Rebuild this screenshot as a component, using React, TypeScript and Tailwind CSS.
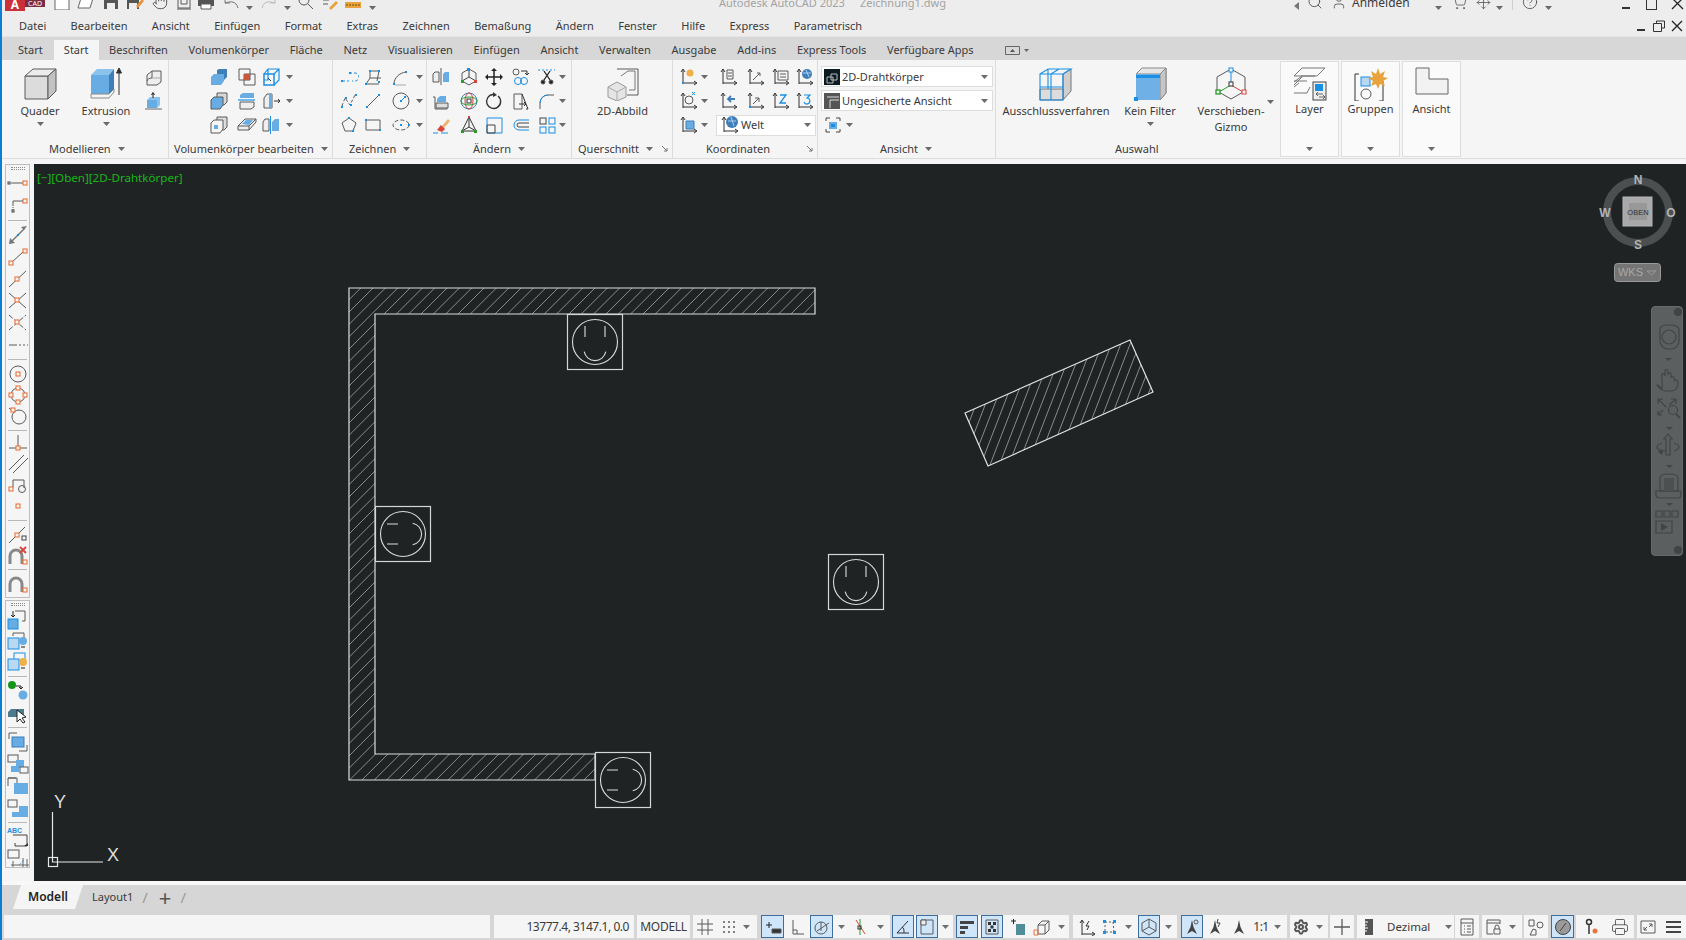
import React from "react";
import { Hand, Search, User, ShoppingCart, CircleHelp, Settings, Printer, Move } from "lucide-react";

const G = "#5a5a5a", B = "#1b8fe3", L = "#67ace3", L2 = "#8cc3ec", D = "#3f7fb8", O = "#e8733c";

const S = ({ w = 20, h = 20, vb, children }: any) => (
  <svg width={w} height={h} viewBox={vb || `0 0 ${w} ${h}`} fill="none" stroke={G} strokeWidth={1} className="block shrink-0">{children}</svg>
);
const Caret = ({ c = "#6a6a6a" }: any) => (
  <svg width="7" height="4" viewBox="0 0 7 4" className="block shrink-0"><path d="M0 0h7L3.5 4z" fill={c} /></svg>
);
const Launch = () => (
  <svg width="6" height="6" viewBox="0 0 6 6" className="block shrink-0"><path d="M0 0l5 5M5 2v3H2" stroke="#777" fill="none" /></svg>
);
const Dot = ({ x, y, c = B, s = 2 }: any) => <rect x={x} y={y} width={s} height={s} fill={c} stroke="none" />;

/* ---------- ribbon icons ---------- */
const Quader = () => (
  <S w={34} h={34}>
    <path d="M2 9h23v23H2z" fill="#dcdcdc" />
    <path d="M2 9l8-7h23l-8 7z" fill="#ececec" />
    <path d="M25 9l8-7v22l-8 8z" fill="#c2c2c2" />
  </S>
);
const Extrusion = () => (
  <S w={32} h={34}>
    <path d="M1 9l6-7h17v22l-5 7H1z" fill="#e2e2e2" stroke="none" />
    <path d="M1 8h18v19H1z" fill={L} stroke="none" />
    <path d="M1 8l6-6h17l-5 6z" fill={L2} stroke="none" />
    <path d="M19 8l5-6v20l-5 5z" fill={D} stroke="none" />
    <path d="M1 27h18l5-5v3l-5 6H1z" fill="#f4f4f4" stroke="#8a8a8a" />
    <path d="M29 28V3M26.5 6L29 1l2.500 5z" stroke="#333" fill="#333" />
  </S>
);
const M1 = () => <S><path d="M3 8l5-4h9v11l-4 3H3z" fill="#eee" /><path d="M8 4v7c-2 0-5 1-5 3" /><path d="M8 11h9" stroke="#aaa" /></S>;
const M2 = () => <S><path d="M3 9h10v8H3z" fill={L} stroke="none" /><path d="M3 9l3-3h10l-3 3zM13 9l3-3v8l-3 3z" fill={L2} stroke="none" /><path d="M9 7V2M7.500 4L9 1.500 10.500 4" stroke="#222" /><path d="M1 18h17" stroke="#666" /></S>;

const V11 = () => <S><path d="M8 3l2-1h8v8l-3 3H8z" fill={D} stroke="none" /><path d="M2 10l3-3h10v7l-3 4H2z" fill={L} stroke="none" /></S>;
const V12 = () => <S><path d="M2 2h11v11H2z" /><path d="M7 7h11v11H7z" /><path d="M7 7h6v6H7z" fill="#c9573a" stroke="none" /></S>;
const V13 = () => <S><path d="M3 7h10v11H3z" fill="#f4f8fc" stroke={B} strokeWidth={1.5} /><path d="M3 7l4-5h11v11l-5 5M13 7l5-5M7 2v11H3" stroke={B} strokeWidth={1.200} /><path d="M7 11l3 3" stroke="#333" /></S>;
const V21 = () => <S><path d="M8 2h10v9l-3 3H8z" fill="#d8d8d8" /><path d="M2 9l3-3h9v8l-3 4H2z" fill={L} /></S>;
const V22 = () => <S><path d="M3 4l3-2h11v5H3z" fill={L} stroke="none" /><path d="M1 9h17" stroke={B} strokeWidth={1.200} /><path d="M3 11h14v5l-3 2H3z" fill="#efefef" /></S>;
const V23 = () => <S><path d="M3 7l3-4h5v14H3z" fill="#eee" /><path d="M8 3h3v14H8z" fill={L} stroke="none" /><path d="M13 10h6M17 8l2 2-2 2" stroke="#333" /></S>;
const V31 = () => <S><path d="M8 2h10v10l-3 3H8z" fill="#ddd" /><path d="M2 8l3-3h9v9l-3 4H2z" fill="#f5f5f5" /><path d="M5 10h4v4H5z" fill={L} stroke="none" /></S>;
const V32 = () => <S><path d="M1 11l7-7h11v3l-7 8H1z" fill="#eee" /><path d="M5 9l4-4h7l-4 5z" fill={L} stroke="none" /><path d="M1 11h11v4M12 11l7-7" /></S>;
const V33 = () => <S><path d="M2 7l2-3h4v12H2z" fill="#eee" /><path d="M11 7l3-3h4v12h-7z" fill={L} stroke="none" /><path d="M9.500 1v18" stroke={B} /></S>;

const Z11 = () => <S><path d="M3 14h7M10 6h6a4 4 0 0 1 0 8h-3" strokeDasharray="3 2" stroke={B} /><Dot x={2} y={13} /><Dot x={10} y={5} /></S>;
const Z12 = () => <S><path d="M7 4v7M7 4h9l-2 10M3 17l4-6h11M3 17h13" /><Dot x={6} y={3} /><Dot x={15} y={3} /><Dot x={2} y={16} /><Dot x={15} y={14} /></S>;
const Z13 = () => <S><path d="M3 17c0-6 5-11 12-12" /><path d="M4 18h11" stroke="#aaa" /><Dot x={2} y={16} /><Dot x={14} y={4} /></S>;
const Z21 = () => <S><path d="M3 15l3-8 5 7 5-10" strokeDasharray="3 2" /><Dot x={2} y={15} /><Dot x={6} y={6} /><Dot x={11} y={13} /><Dot x={16} y={3} /></S>;
const Z22 = () => <S><path d="M4 16L16 4" /><Dot x={3} y={15} /><Dot x={15} y={3} /></S>;
const Z23 = () => <S><circle cx={10} cy={10} r={8} /><path d="M10 10l4-4" stroke={B} /><Dot x={9} y={9} /><Dot x={13} y={5} /></S>;
const Z31 = () => <S><path d="M10 3l7 5-3 8H6L3 8z" /><Dot x={9} y={2} /><Dot x={13} y={15} /></S>;
const Z32 = () => <S><path d="M3 5h14v10H3z" /><Dot x={2} y={4} /><Dot x={16} y={14} /></S>;
const Z33 = () => <S><ellipse cx={10} cy={10} rx={8} ry={5} strokeDasharray="4 2" /><Dot x={9} y={9} /><Dot x={17} y={9} /></S>;

const A11 = () => <S><path d="M2 7l2-2h4v10H2z" fill="#eee" /><path d="M12 7l2-2h4v10h-6z" fill={L} stroke="none" /><path d="M10 1v17" /></S>;
const A12 = () => <S><path d="M10 2l7 4v8l-7 4-7-4V6z" /><path d="M10 10V2M10 10l-7 4M10 10l7 4" stroke="#444" /><Dot x={8} y={1} s={3} /><Dot x={2} y={13} c="#2a9a2a" s={3} /><Dot x={15} y={13} c="#d8433c" s={3} /></S>;
const A13 = () => <S><path d="M10 2v16M2 10h16" stroke="#222" strokeWidth={1.500} /><path d="M10 1l-3 3h6zM10 19l-3-3h6zM1 10l3-3v6zM19 10l-3-3v6z" fill="#222" stroke="none" /></S>;
const A14 = () => <S><rect x={2} y={2} width={6} height={6} rx={3} /><path d="M10 4h6v3M14 6l2 2 2-2" stroke="#333" /><circle cx={7} cy={14} r={3.500} stroke={B} /><circle cx={13} cy={14} r={3.500} stroke={B} /></S>;
const A15 = () => <S><path d="M1 3h17" stroke={B} strokeDasharray="2 2" /><path d="M7 4l6 9M13 4l-6 9" stroke="#222" strokeWidth={1.300} /><circle cx={6} cy={15} r={2} fill="#222" /><circle cx={14} cy={15} r={2} fill="#222" /></S>;
const A21 = () => <S><path d="M2 6h2v12h12v-3" /><path d="M6 8l3-3h6v6H6z" fill={L} stroke="none" /><path d="M5 12h12v5H5z" fill="#ddd" /></S>;
const A22 = () => <S><circle cx={10} cy={10} r={8} stroke={D} /><ellipse cx={10} cy={10} rx={4} ry={8} stroke="#d8433c" /><ellipse cx={10} cy={10} rx={8} ry={4} stroke="#2a9a2a" /><rect x={8} y={8} width={4} height={4} stroke="#333" /></S>;
const A23 = () => <S><path d="M14 5a7 7 0 1 1-5-1.500" stroke="#333" strokeWidth={1.400} /><path d="M9 1l4 3-4 2z" fill="#333" stroke="none" /></S>;
const A24 = () => <S><path d="M3 3h8v15H3z" /><path d="M11 3l6 15h-2M8 13h7M13 11l2 2-2 2" stroke="#333" /></S>;
const A25 = () => <S><path d="M3 18v-6a8 8 0 0 1 8-8h6" /><path d="M3 12a8 8 0 0 1 8-8" stroke={B} /></S>;
const A31 = () => <S><path d="M11 11l6-7 2 2-6 7z" fill="#efb36b" stroke="none" /><path d="M6 15l4-5 4 4-3 3z" fill="#d8433c" stroke="none" /><path d="M2 18h5M10 18h7" stroke={B} /></S>;
const A32 = () => <S><path d="M10 2L3 16h14zM10 2v10M3 16l7-4 7 4" stroke="#333" /><Dot x={9} y={1} c="#d8433c" s={2} /><Dot x={2} y={15} c="#2a9a2a" s={3} /><Dot x={15} y={15} c="#2a9a2a" s={3} /></S>;
const A33 = () => <S><path d="M3 3h15v15H3z" stroke={B} /><path d="M3 10h8v8H3z" stroke="#444" /></S>;
const A34 = () => <S><path d="M18 5H8a5 5 0 0 0 0 10h10" stroke={B} /><path d="M18 8H8a2 2 0 0 0 0 4h10" stroke="#444" /></S>;
const A35 = () => <S><g stroke={B}><rect x={3} y={3} width={6} height={6} stroke="#444" /><rect x={12} y={3} width={6} height={6} /><rect x={3} y={12} width={6} height={6} /><rect x={12} y={12} width={6} height={6} /></g></S>;

const Abbild = () => (
  <S w={34} h={34}>
    <path d="M11 2h21v26H21" /><path d="M15 9l7-5h7v19h-6" stroke="#777" />
    <path d="M2 20l9-5 9 5v10l-9 4-9-4z" fill="#e5e5e5" stroke="#999" />
    <path d="M2 20l9 5 9-5M11 25v9" stroke="#aaa" />
  </S>
);
const Axes = ({ children }: any) => <S><path d="M5 17V3M3 5l2-3 2 3M5 16h13M16 14l3 2-3 2" stroke="#333" />{children}</S>;
const K11 = () => <Axes><circle cx={12} cy={6} r={3.500} fill="#efb04a" stroke="none" /><Dot x={4} y={15} /></Axes>;
const K12 = () => <Axes><path d="M9 3h6v9H9zM10 6h4M10 9h4" /></Axes>;
const K13 = () => <Axes><path d="M8 13l7-7M12 6h3v3" /></Axes>;
const K14 = () => <Axes><path d="M8 4h10v9H8zM10 7h6M10 10h6" /></Axes>;
const K15 = () => <Axes><circle cx={13} cy={7} r={5} fill={D} stroke="none" /><path d="M9 6h8M12 3l3 7" stroke="#a8d0f0" /></Axes>;
const K21 = () => <Axes><circle cx={11} cy={9} r={4} /><path d="M14 4l3-3M14 1l3 3" stroke={B} /></Axes>;
const K22 = () => <Axes><path d="M17 8H11M13 5l-3 3 3 3" stroke={D} strokeWidth={1.800} /></Axes>;
const K23 = () => <Axes><path d="M8 13l6-6M10 7h4v4" /><Dot x={4} y={15} /></Axes>;
const K24 = () => <Axes><path d="M10 4h6l-6 8h6" stroke={B} strokeWidth={1.300} /></Axes>;
const K25 = () => <Axes><path d="M10 4h6l-3 3a3 3 0 1 1-3 4" stroke={B} strokeWidth={1.200} /></Axes>;
const K31 = () => <Axes><path d="M8 6h8v8H8z" fill={L} stroke="#3f7fb8" /></Axes>;
const Welt = () => <Axes><circle cx={13} cy={7} r={6} fill={D} stroke="none" /><path d="M9 6h8M12 2l3 9" stroke="#a8d0f0" /></Axes>;
const Wire = () => (
  <svg width="16" height="16" viewBox="0 0 16 16" className="block shrink-0"><rect width="16" height="16" fill="#0c1a24" /><path d="M7 5h6v6H7zM3 8h6v6H3z" fill="none" stroke="#b8b8b8" /></svg>
);
const UnsavedV = () => (
  <svg width="16" height="16" viewBox="0 0 16 16" className="block shrink-0"><rect width="16" height="16" fill="#555" /><path d="M3 4h12M6 15V7h9" fill="none" stroke="#ddd" /></svg>
);
const AV = () => <S><path d="M3 6V3h4M13 3h4v3M3 14v3h4M17 14v3h-4" stroke="#444" /><path d="M6 7h8v7H6z" fill={L} stroke="none" /><path d="M8 9h4v3H8z" fill={B} stroke="none" /></S>;
const Iso = () => (
  <S w={34} h={34}>
    <g stroke="#777"><path d="M24 7l8-5v22l-8 9z" fill="#cfcfcf" /><path d="M1 22h23v11H1z" fill="#dcdcdc" /></g>
    <g stroke={B} strokeWidth={1.100}><path d="M1 7h23v26H1zM1 7l8-5h23l-8 5M1 20h23M12 7v26M9 2v20M20 2l-8 5" /></g>
  </S>
);
const Filt = () => (
  <S w={34} h={34}>
    <path d="M3 7l6-6h24v25l-6 7V7z" fill="#e6e6e6" stroke="#888" />
    <path d="M27 7l6-6v25l-6 7z" fill="#c6c6c6" stroke="#888" />
    <path d="M3 7h24v26H3z" fill="#6fb1e6" stroke="none" />
    <path d="M3 8h24v3H3z" fill={B} stroke="none" />
    <Dot x={1} y={30} s={4} />
  </S>
);
const Gizmo = () => (
  <S w={34} h={34}>
    <path d="M17 2l14 8v14l-14 8-14-8V10z" />
    <path d="M17 18V5" stroke={B} /><path d="M17 18L5 25" stroke="#2a9a2a" /><path d="M17 18l12 7" stroke="#d8433c" />
    <rect x={15} y={15} width={4} height={4} fill="#f5f5f5" stroke="#333" />
    <rect x={15} y={1} width={4} height={4} fill="#f5f5f5" stroke={B} />
    <rect x={2} y={23} width={4} height={4} fill="#f5f5f5" stroke="#2a9a2a" strokeWidth={1.300} />
    <rect x={28} y={23} width={4} height={4} fill="#f5f5f5" stroke="#d8433c" />
  </S>
);
const LayerI = () => (
  <S w={34} h={34}>
    <path d="M9 1h23l-8 8H1zM1 15l8-6M1 18l8-8" stroke="#777" />
    <path d="M8 9h14M1 14h13M1 26h13l3-6M1 20l5-4" stroke="#777" />
    <rect x={20} y={15} width={13} height={18} fill="#eee" stroke="#444" />
    <path d="M22 17h8v7h-8z" fill={B} stroke="none" />
    <path d="M23 27h7M25 25l-2 2 2 2M26 30h6M30 28l2 2-2 2" stroke="#444" strokeWidth={0.800} />
  </S>
);
const Gruppen = () => (
  <S w={34} h={34}>
    <path d="M5 7H1v27h4M25 34h4V14" stroke="#333" />
    <rect x={7} y={10} width={9} height={9} fill="#b8d8f4" stroke={B} />
    <circle cx={12} cy={27} r={5} />
    <path d="M24 1l2 6 5-3-2 6 5 1-5 3 2 5-5-2-2 5-2-5-5 2 2-5-5-3 5-1-2-6 5 3z" fill="#e8a33c" stroke="none" />
  </S>
);
const AnsichtI = () => (
  <S w={34} h={34}>
    <path d="M1 1h13v11h19v15H1z" fill="#f2f2f2" stroke="#666" />
  </S>
);

/* ---------- ribbon helpers ---------- */
const Ctr = ({ children, className = "" }: any) => <div className={`flex items-center justify-center ${className}`}>{children}</div>;
const PanelLabel = ({ text, caret, launch, className = "" }: any) => (
  <div className={`h-[20px] pt-[2px] flex items-center whitespace-nowrap ${className}`}>
    <span>{text}</span>
    {caret && <span className="ml-[7px]"><Caret /></span>}
    {launch}
  </div>
);
const Big = ({ icon, label, caret, className = "" }: any) => (
  <div className={`flex flex-col items-center pt-[7px] whitespace-nowrap ${className}`}>
    <div className="h-[34px] flex items-end">{icon}</div>
    <div className="mt-[2px] leading-[16px] text-center">{label}</div>
    {caret && <div className="mt-[3px]"><Caret /></div>}
  </div>
);
const Panel = ({ className = "", children }: any) => (
  <div className={`shrink-0 h-[98px] flex flex-col border-r border-[#dcdcdc] ${className}`}>{children}</div>
);
const Cells = ({ items }: any) => <>{items.map((I: any, k: number) => <Ctr key={k}>{I === Caret ? <Caret /> : I ? <I /> : null}</Ctr>)}</>;
const Dropdown = ({ icon, text, className = "" }: any) => (
  <div className={`h-[21px] bg-white border border-[#dddddd] flex items-center pl-[2px] pr-[4px] gap-[2px] ${className}`}>
    {icon}<span className="flex-1 whitespace-nowrap">{text}</span><Caret />
  </div>
);
const SidePanel = ({ icon, label }: any) => (
  <div className="w-[59px] h-[96px] bg-[#fafafa] border border-[#dedede] flex flex-col items-center pt-[5px]">
    <div className="h-[34px]">{icon}</div>
    <div className="leading-[16px]">{label}</div>
    <div className="mt-auto mb-[5px]"><Caret /></div>
  </div>
);

/* ---------- left toolbar icons ---------- */
const Sq = ({ x, y, s = 4, c = O }: any) => <rect x={x} y={y} width={s} height={s} fill="#f5f5f5" stroke={c} strokeWidth={1.100} />;
const T: any = {
  a: <><Sq x={1} y={9} s={2} c="#555" /><path d="M4 10h12" /><Sq x={16} y={8} /></>,
  b: <><Sq x={16} y={4} /><path d="M16 6H6v5" /><path d="M6 12v3" strokeDasharray="1 1" /><Sq x={5} y={15} s={2} c="#555" /></>,
  c: <><path d="M3 19l14-14" stroke="#777" strokeWidth={1.400} /><path d="M20 2l-6 1 3 3zM2 20l1-6 5 5z" fill="#777" stroke="none" /><Dot x={10} y={10} s={2} /></>,
  d: <><path d="M4 17L17 5" /><Sq x={2} y={15} /><Sq x={16} y={3} /></>,
  e: <><path d="M2 19L19 3" /><Sq x={8} y={9} /></>,
  f: <><path d="M2 3l17 15M2 18L19 3" /><Sq x={8} y={8} /></>,
  g: <><path d="M2 3l17 15M2 18L19 3" strokeDasharray="5 2" /><Sq x={8} y={8} /></>,
  h: <path d="M2 11h8M12 11h2M16 11h2M20 11h1" />,
  i: <><circle cx={11} cy={11} r={8} /><Sq x={9} y={9} /></>,
  j: <><circle cx={11} cy={11} r={7} /><Sq x={9} y={2} /><Sq x={9} y={16} /><Sq x={2} y={9} /><Sq x={16} y={9} /></>,
  k: <><circle cx={12} cy={12} r={7} /><path d="M2 3l5 4" /><Sq x={4} y={3} /></>,
  l: <><path d="M2 15h18M11 2v11" /><Sq x={9} y={13} /></>,
  m: <path d="M2 17L17 2M6 20L21 5" />,
  n: <><path d="M6 14V7h11v8" /><circle cx={15} cy={16} r={3.500} /><Sq x={2} y={14} /></>,
  o: <Sq x={9} y={9} />,
  p: <><path d="M2 19L18 3" /><Sq x={8} y={9} /><Sq x={15} y={12} c="#555" /></>,
  q: <><path d="M3 19V11a6 6 0 0 1 12 0v8" stroke="#888" strokeWidth={3} /><path d="M13 2l6 6M19 2l-6 6" stroke="#d8433c" strokeWidth={1.800} /><Sq x={16} y={15} /></>,
  r: <><path d="M3 19V11a6 6 0 0 1 12 0v8" stroke="#888" strokeWidth={3} /><Sq x={16} y={15} /></>,
  s: <><path d="M8 2h10v10h-3" /><path d="M6 2v6M4 6l2 2 2-2" stroke="#222" /><rect x={1} y={10} width={10} height={10} fill={L} stroke={B} /></>,
  t: <><path d="M6 5V2h11v6" /><rect x={1} y={7} width={11} height={11} fill="#b8d8f4" stroke={B} /><circle cx={16} cy={10} r={4} fill={L} stroke="none" /><path d="M14 15h4v2h-4z" fill="#888" stroke="none" /></>,
  u: <><rect x={7} y={1} width={11} height={8} stroke={B} /><rect x={1} y={7} width={11} height={11} fill="#b8d8f4" stroke={B} /><circle cx={16} cy={10} r={4} fill="#efb04a" stroke="none" /><path d="M14 15h4v2h-4z" fill="#888" stroke="none" /></>,
  v: <><circle cx={5} cy={5} r={4} fill="#12961a" stroke="none" /><circle cx={16} cy={15} r={4.500} fill={L} stroke="none" /><path d="M9 6h5v3M12 7l2 2 2-2" stroke="#222" /></>,
  w: <><path d="M1 10l3-3h13v8H1z" fill="#4d7b8c" stroke="none" /><path d="M10 8l0 12 3-3 3 4 2-1-3-4 4-1z" fill="#fff" stroke="#222" /></>,
  x: <><path d="M2 8V2h8M20 14v6h-8" /><rect x={5} y={6} width={12} height={10} fill={L} stroke="#3f7fb8" /></>,
  y: <><rect x={1} y={2} width={10} height={7} /><path d="M4 13h5V7h8v8h-5v4H4z" fill={L} stroke="none" /><rect x={13} y={14} width={8} height={6} fill="#f5f5f5" /></>,
  z: <><path d="M1 3h8M1 3v8" /><path d="M1 3h9v5" /><rect x={7} y={8} width={14} height={11} fill={L} stroke="none" /></>,
  A: <><rect x={1} y={3} width={9} height={7} /><path d="M5 15h7v-6h9v11H5z" fill={L} stroke="none" /></>,
  B: <><text x={0} y={7} fontSize={7} fontWeight={700} fill={B} stroke="none" fontFamily="'Liberation Sans',sans-serif">ABC</text><path d="M6 9h14v11H8v-3" stroke="#444" /><path d="M17 20l4-3v3z" fill="#333" stroke="none" /></>,
  C: <><rect x={1} y={2} width={11} height={8} /><path d="M6 13v7h14v-9M4 17h18M16 10v12" stroke="#666" /><path d="M12 17l5-5" stroke={B} strokeDasharray="1 1" /></>,
};
const ToolItem = ({ k, h = "h-[22px]" }: any) => (
  <div className={`w-full flex items-center justify-center ${h}`}>
    <S w={22} h={22}>{T[k]}</S>
  </div>
);
const Sep = () => <div className="w-[19px] h-px bg-[#b8b8b8] my-[3px] shrink-0" />;
const Grip = () => <div className="w-[14px] h-[3px] mt-[2px] mb-[3px] shrink-0 border-t border-b border-dotted border-[#888]" />;

/* ---------- canvas ---------- */
const wall = "349,288 815,288 815,314 375,314 375,754 595,754 595,780 349,780";
const rect = "965,413 1130,340 1153,392 988,466";
const wallHatch: number[] = [];
for (let c = 636.4; c < 1600; c += 12.33) wallHatch.push(c);
const rectHatch: number[] = [];
for (let k = -14; k < 10; k++) rectHatch.push(36.4 + 8.72 * k);

const Socket = ({ x, y, r }: any) => (
  <g>
    <rect x={x - 27.5} y={y - 27.5} width={55} height={55} stroke="#d6d6d6" strokeWidth={1.200} />
    <g transform={`translate(${x} ${y}) rotate(${r})`} stroke="#dcdcdc" strokeWidth={1.100}>
      <circle r={22.500} />
      <path d="M-10 -16V-5M10 -16V-5" />
      <path d="M-10.800 9.700A11 11 0 0 0 10.800 9.700" />
    </g>
  </g>
);

const Drawing = () => (
  <svg width="1652" height="717" viewBox="34 164 1652 717" fill="none" className="block">
    <defs>
      <clipPath id="w"><polygon points={wall} /></clipPath>
      <clipPath id="r"><polygon points={rect} /></clipPath>
    </defs>
    <g clipPath="url(#w)" stroke="#8a8c8c" strokeWidth={1}>
      {wallHatch.map((c) => <line key={c} x1={c - 250} y1={250} x2={c - 800} y2={800} />)}
    </g>
    <polygon points={wall} stroke="#dcdcdc" strokeWidth={1.200} />
    <g clipPath="url(#r)" stroke="#8a8c8c" strokeWidth={1}>
      {rectHatch.map((o) => {
        const cx = 1059 + 0.933 * o, cy = 403 + 0.36 * o;
        return <line key={o} x1={cx - 0.36 * 90} y1={cy + 0.933 * 90} x2={cx + 0.36 * 90} y2={cy - 0.933 * 90} />;
      })}
    </g>
    <polygon points={rect} stroke="#e4e4e4" strokeWidth={1.200} />
    <Socket x={595} y={342} r={0} />
    <Socket x={403} y={534} r={-90} />
    <Socket x={623} y={780} r={-90} />
    <Socket x={856} y={582} r={0} />
    {/* UCS */}
    <g stroke="#e6e6e6" strokeWidth={1.200}>
      <rect x={48.500} y={857.500} width={9} height={9} />
      <path d="M52.500 812V862H103" />
    </g>
    <text x={54} y={808} fontSize={18} fontFamily="'Liberation Sans',sans-serif" fill="#dedede">Y</text>
    <text x={107} y={861} fontSize={18} fontFamily="'Liberation Sans',sans-serif" fill="#dedede">X</text>
    {/* View cube */}
    <circle cx={1638} cy={212} r={31} stroke="#4b4f50" strokeWidth={8} />
    <rect x={1623} y={197} width={29} height={29} fill="#a9a9a9" stroke="#b5b5b5" />
    <rect x={1629} y={203} width={18} height={17} fill="#989898" />
    <text x={1638} y={215} textAnchor="middle" fontSize={7.500} fontFamily="'Liberation Sans',sans-serif" fill="#303030">OBEN</text>
    <g fontFamily="'Liberation Sans',sans-serif" fontWeight={700} fontSize={12} fill="#b4b4b4" textAnchor="middle">
      <text x={1638} y={184}>N</text><text x={1638} y={249}>S</text><text x={1605} y={217}>W</text><text x={1671} y={217}>O</text>
    </g>
    <rect x={1614.500} y={263.500} width={46} height={18} rx={3} fill="#757575" stroke="#9a9a9a" />
    <text x={1618} y={276} fontSize={11} fontFamily="'Liberation Sans',sans-serif" fill="#a8a8a8" textLength={25}>WKS</text>
    <path d="M1647 271h9l-4.500 4z" stroke="#999" />
  </svg>
);

const NavBar = () => (
  <div className="absolute right-[3px] top-[142px] w-[32px] h-[250px] rounded-[4px] bg-[#5b5f5f] border border-[#666a6a]">
    <svg width="32" height="250" viewBox="0 0 32 250" fill="none" stroke="#414545" strokeWidth={1.200} className="block">
      <circle cx={26} cy={5} r={3.500} fill="#444" />
      <path d="M8 22c0-3 3-4 9-4s10 1 10 5v11a8 8 0 0 1-8 8h-3c-5 0-8-4-8-9z" />
      <circle cx={17} cy={30} r={7} />
      <path d="M13 51h7l-3.500 3z" fill="#414545" stroke="none" />
      <path d="M14 120h7l-3.500 3zM14 158h7l-3.500 3zM14 196h7l-3.500 3z" fill="#414545" stroke="none" />
      <path d="M6 78l4 4c1-5-1-12 0-15 1-1 3 0 3 2v-5c0-2 3-2 3 0v4c0-3 3-3 3 0v3c0-2 3-2 3 0l1 3c0-2 3-1 3 1 0 6-3 9-6 9h-6c-4 0-7-3-9-6z" />
      <path d="M6 92l8 8M6 92v5M6 92h5M6 108l5-5M6 108v-4M6 108h4M24 92l-7 6M24 92v5M24 92h-5" />
      <circle cx={21} cy={103} r={4.500} /><path d="M24 107l4 4" strokeWidth={2} />
      <path d="M16 127l4 5h-2v16h-4v-16h-2z" />
      <path d="M10 136c-3 1-5 2-5 4 0 3 5 4 9 4M22 136c3 1 5 2 5 4s-2 3-5 4" /><path d="M10 143l-3 2 3 2z" fill="#414545" />
      <path d="M8 171c0-3 3-4 9-4s9 1 9 4v13H8z" /><path d="M4 184h25v4c0 2-2 3-4 3H8c-2 0-4-1-4-3z" /><path d="M12 171h10v13H12z" fill="#4c5050" stroke="none" />
      <path d="M4 204h6v6H4zM12 204h6v6h-6zM20 204h6v6h-6zM4 214h16v12H4z" />
      <path d="M9 216v8l7-4z" fill="#414545" stroke="none" />
      <circle cx={26} cy={243} r={3.500} fill="#444" />
    </svg>
  </div>
);

/* ---------- status bar ---------- */
const Seg = ({ className = "", children }: any) => <div className={`h-[23px] bg-[#f5f5f5] flex items-center shrink-0 ${className}`}>{children}</div>;
const C = ({ w, active, children }: any) => (
  <div className={`flex items-center justify-center h-[23px] shrink-0 ${w} ${active ? "bg-[#cfe5fa] border border-[#3d6e9e]" : ""}`}>{children}</div>
);
const SC = () => <Caret c="#6e6e6e" />;
const Sb = ({ children }: any) => <S w={18} h={18} >{children}</S>;
const Annot = ({ c = "#444", children }: any) => <Sb><path d="M9 2l1.500 7L14 16l-5-3-5 3 3.500-7z" fill={c} stroke="none" />{children}</Sb>;

const Status = () => (
  <div className="h-[25px] bg-[#d6d6d6] flex pl-[2px] text-[12px]">
    <Seg className="w-[486px]" />
    <Seg className="w-[140px] ml-[4px] justify-end pr-[5px] tracking-[-0.45px]">13777.4, 3147.1, 0.0</Seg>
    <Seg className="w-[53px] ml-[3px] justify-center tracking-[-0.3px]">MODELL</Seg>
    <Seg className="w-[64px] ml-[3px] pl-[3px]">
      <C w="w-[18px]"><Sb><path d="M1 6h16M1 12h16M6 1v16M12 1v16" /></Sb></C>
      <C w="w-[6px]" />
      <C w="w-[18px]"><Sb><path d="M3 4h2M8 4h2M13 4h2M3 9h2M8 9h2M13 9h2M3 14h2M8 14h2M13 14h2" strokeWidth={1.500} /></Sb></C>
      <C w="w-[16px]"><SC /></C>
    </Seg>
    <Seg className="w-[129px] ml-[4px]">
      <C w="w-[23px]" active><Sb><path d="M2 7h6M5 4v6" stroke="#222" /><path d="M8 11h9v4H8z" fill="#333" /></Sb></C>
      <C w="w-[26px]"><Sb><path d="M5 2v14h11M5 12h4v4" /></Sb></C>
      <C w="w-[23px]" active><Sb><circle cx={8} cy={10} r={6} /><path d="M4 13L16 5M8 13V4" /></Sb></C>
      <C w="w-[16px]"><SC /></C>
      <C w="w-[22px]"><Sb><path d="M5 2l9 14" stroke="#d8433c" /><path d="M9 1v16" stroke="#2a9a2a" /><rect x={7} y={8} width={3} height={3} stroke="#333" /></Sb></C>
      <C w="w-[19px]"><SC /></C>
    </Seg>
    <Seg className="w-[61px] ml-[2px]">
      <C w="w-[22px]" active><Sb><path d="M3 15L14 3M3 15h12M8 9c2 1 2 3 2 6" stroke="#333" /></Sb></C>
      <C w="w-[2px]" />
      <C w="w-[22px]" active><Sb><path d="M3 2h12v14H3z" /><path d="M3 2h5v5H3z" fill="#eee" /></Sb></C>
      <C w="w-[15px]"><SC /></C>
    </Seg>
    <Seg className="w-[113px] ml-[3px]">
      <C w="w-[22px]" active><Sb><path d="M2 3h14v3H2zM2 8h8v3H2zM2 13h5v3H2z" fill="#444" stroke="none" /></Sb></C>
      <C w="w-[3px]" />
      <C w="w-[22px]" active><Sb><path d="M3 2h12v14H3z" /><path d="M5 4h3v3H5zM10 4h3v3h-3zM5 11h3v3H5zM10 11h3v3h-3zM7.500 7.500h3v3h-3z" fill="#333" stroke="none" /></Sb></C>
      <C w="w-[4px]" />
      <C w="w-[22px]"><Sb><path d="M2 3h5M4.500 1v5" stroke="#222" /><path d="M7 6h9v11H7z" fill="#4f8d99" stroke="none" /></Sb></C>
      <C w="w-[25px]"><Sb><path d="M5 7l4-4h7v9l-4 4H5zM5 7h7v9M12 7l4-4" /><path d="M1 12h4v5H1z" stroke={O} /></Sb></C>
      <C w="w-[15px]"><SC /></C>
    </Seg>
    <Seg className="w-[104px] ml-[4px]">
      <C w="w-[25px]"><Sb><path d="M5 17V3M3 5l2-3 2 3M5 16h12M15 14l3 2-3 2" stroke="#333" /><path d="M12 3l-3 5h3l-2 4" stroke="#333" /></Sb></C>
      <C w="w-[21px]"><Sb><path d="M5 4h8l1 10H5z" strokeDasharray="2 2" /><Dot x={3} y={2} s={3} /><Dot x={13} y={2} s={3} /><Dot x={3} y={13} s={3} /><Dot x={13} y={13} s={3} /></Sb></C>
      <C w="w-[19px]"><SC /></C>
      <C w="w-[22px]" active><Sb><path d="M9 1l7 4v8l-7 4-7-4V5zM9 9V1M9 9l-7 4M9 9l7 4" /></Sb></C>
      <C w="w-[17px]"><SC /></C>
    </Seg>
    <Seg className="w-[106px] ml-[4px]">
      <C w="w-[22px]" active><Annot><circle cx={13} cy={4} r={2} /></Annot></C>
      <C w="w-[24px]"><Annot><path d="M12 1l-1 4h3l-2 4" stroke="#444" /></Annot></C>
      <C w="w-[24px]"><Annot /></C>
      <C w="w-[20px]"><span className="tracking-[-0.5px]">1:1</span></C>
      <C w="w-[12px]"><SC /></C>
    </Seg>
    <Seg className="w-[38px] ml-[3px] pl-[1px]">
      <C w="w-[20px]"><Settings size={16} strokeWidth={3} color="#555" /></C>
      <C w="w-[17px]"><SC /></C>
    </Seg>
    <Seg className="w-[24px] ml-[2px] justify-center"><Sb><path d="M9 1v16M1 9h16" strokeWidth={1.300} /></Sb></Seg>
    <Seg className="w-[97px] ml-[3px] pl-[3px]">
      <C w="w-[18px]"><Sb><path d="M5 1h8v16H5z" fill="#555" stroke="none" /><path d="M5 4h3M5 7h2M5 10h3M5 13h2" stroke="#fff" /></Sb></C>
      <C w="w-[9px]" />
      <span className="w-[55px] text-[11.5px]">Dezimal</span>
      <C w="w-[12px]"><SC /></C>
    </Seg>
    <Seg className="w-[24px] ml-px justify-center"><Sb><path d="M3 1h12v16H3zM3 5h12M6 8h1M9 8h4M6 11h1M9 11h4M6 14h1M9 14h4" /></Sb></Seg>
    <Seg className="w-[40px] ml-[3px] pl-[2px]">
      <C w="w-[20px]"><Sb><path d="M2 2h13v4M2 2v14h6M2 5h13" /><path d="M9 11h6v5H9zM10 11V9a2 2 0 0 1 4 0v2" /></Sb></C>
      <C w="w-[16px]"><SC /></C>
    </Seg>
    <Seg className="w-[24px] ml-[2px] justify-center"><Sb><path d="M2 2h5v6H2zM9 12l-3-1-3 6h6z" /><circle cx={13} cy={7} r={3} /></Sb></Seg>
    <Seg className="w-[23px] ml-[3px]">
      <C w="w-[23px]" active><Sb><circle cx={9} cy={9} r={7.500} fill="#9a9a9a" stroke="#444" /><path d="M6 13l6-8" stroke="#444" /></Sb></C>
    </Seg>
    <Seg className="w-[58px] ml-[2px]">
      <C w="w-[30px]"><Sb><circle cx={7} cy={4} r={2.500} stroke="#333" strokeWidth={1.500} /><path d="M7 7v9" stroke="#333" strokeWidth={1.500} /><circle cx={13} cy={13} r={2.500} fill={O} stroke="none" /></Sb></C>
      <C w="w-[28px]"><Printer size={18} strokeWidth={1.200} color="#555" /></C>
    </Seg>
    <Seg className="w-[50px] ml-[3px]">
      <C w="w-[22px]"><Sb><path d="M2 3h14v12H2zM5 12l3-3M5 9v3h3M13 6l-3 3M13 9V6h-3" /></Sb></C>
      <C w="w-[28px]"><Sb><path d="M2 4h15M2 9h15M2 14h15" strokeWidth={1.800} stroke="#444" /></Sb></C>
    </Seg>
  </div>
);

const menu = ["Datei", "Bearbeiten", "Ansicht", "Einfügen", "Format", "Extras", "Zeichnen", "Bemaßung", "Ändern", "Fenster", "Hilfe", "Express", "Parametrisch"];
const tabsLeft = ["Beschriften", "Volumenkörper", "Fläche", "Netz", "Visualisieren", "Einfügen", "Ansicht", "Verwalten", "Ausgabe", "Add-ins", "Express Tools", "Verfügbare Apps"];

const qat = [
  ["w-[24px]", <S w={16} h={16}><path d="M1 0h10l4 4v12H1z" fill="#fff" stroke="#666" /></S>],
  ["w-[24px]", <S w={18} h={16}><path d="M1 14l4-13h12l-4 13z" fill="#fff" stroke="#666" /></S>],
  ["w-[25px]", <S w={16} h={16}><path d="M1 0h14v15H1z" fill="#555" stroke="none" /><path d="M4 9h8v6H4z" fill="#eee" stroke="none" /></S>],
  ["w-[24px]", <S w={18} h={16}><path d="M1 0h12v15H1z" fill="#555" stroke="none" /><path d="M3 9h8v6H3z" fill="#eee" stroke="none" /><path d="M10 12l6-7 2 2-6 7z" fill="#e8933c" stroke="none" /></S>],
  ["w-[26px]", <Hand size={16} strokeWidth={1.300} color="#444" />],
  ["w-[22px]", <S w={16} h={16}><path d="M2 0h12v14H2zM5 4h6v6H5z" /><path d="M1 15h14" /></S>],
  ["w-[22px]", <S w={18} h={16}><path d="M1 5h16v7H1z" fill="#555" stroke="none" /><path d="M4 10h10v5H4z" fill="#fff" /></S>],
];

export default function App() {
  return (
    <div className="w-[1686px] h-[940px] overflow-hidden flex bg-[#f5f5f5] text-[#3a3a3a] text-[11px] leading-[16px] [font-family:'Noto_Sans',sans-serif]">
      <div className="w-[2px] h-full bg-[#0a7dd4] shrink-0" />
      <div className="w-[1684px] flex flex-col">
        {/* title */}
        <div className="h-[16px] bg-[#ededed] flex items-start shrink-0">
          <div className="h-[10px] flex items-end w-full">
            <div className="ml-[3px] w-[45px] self-start flex items-start">
              <div className="w-[20px] h-[11px] bg-[#cb2f3a] flex items-end justify-center text-white font-bold text-[12px] leading-[12px]">A</div>
              <div className="w-[20px] h-[7px] bg-[#7d2b42] flex items-end justify-center text-white text-[7px] leading-[7px]">CAD</div>
            </div>
            {qat.map(([w, ic]: any, k) => <Ctr key={k} className={w}>{ic}</Ctr>)}
            <Ctr className="w-[24px] ml-[2px]"><S w={18} h={14}><path d="M16 12C14 5 9 5 3 7M3 2v5h5" stroke="#777" /></S></Ctr>
            <Ctr className="w-[12px]"><Caret /></Ctr>
            <Ctr className="w-[24px] ml-[2px]"><S w={18} h={14}><path d="M2 12C4 5 9 5 15 7M15 2v5h-5" stroke="#bbb" /></S></Ctr>
            <Ctr className="w-[12px]"><Caret /></Ctr>
            <Ctr className="w-[24px] ml-[1px]"><S w={16} h={16}><circle cx={6} cy={6} r={5} /><path d="M10 10l5 5" /></S></Ctr>
            <Ctr className="w-[24px]"><S w={18} h={16}><path d="M2 2h9M2 6h6M2 10h5" /><path d="M8 14l7-7 2 2-7 7z" fill="#e8a33c" stroke="none" /></S></Ctr>
            <Ctr className="w-[22px]"><S w={16} h={10}><path d="M0 2h16v6H0z" fill="#e8a33c" stroke="none" /><path d="M2 4v2M5 4v2M8 4v2M11 4v2M14 4v2" stroke="#6b4a12" /></S></Ctr>
            <Ctr className="w-[16px]"><Caret /></Ctr>
            <div className="ml-[339px] text-[#a3a3a3] whitespace-nowrap h-[14px] leading-[14px]">Autodesk AutoCAD 2023</div>
            <div className="ml-[15px] text-[#a3a3a3] whitespace-nowrap h-[14px] leading-[14px]">Zeichnung1.dwg</div>
            <div className="ml-auto flex items-end h-[10px]">
              <Ctr className="w-[12px]"><svg width="5" height="8" viewBox="0 0 5 8"><path d="M5 0v8L0 4z" fill="#777" /></svg></Ctr>
              <Ctr className="w-[26px]"><Search size={16} strokeWidth={1.400} color="#555" /></Ctr>
              <Ctr className="w-[22px]"><User size={16} strokeWidth={1.300} color="#555" /></Ctr>
              <div className="w-[55px] ml-[2px] h-[14px] leading-[14px] whitespace-nowrap text-[12px]">Anmelden</div>
              <Ctr className="w-[14px] ml-[24px]"><Caret /></Ctr>
              <Ctr className="w-[28px]"><ShoppingCart size={15} strokeWidth={1.300} color="#555" /></Ctr>
              <Ctr className="w-[20px]"><Move size={15} strokeWidth={1.300} color="#555" /></Ctr>
              <Ctr className="w-[12px]"><Caret /></Ctr>
              <div className="w-px h-[12px] bg-[#cfcfcf] ml-[7px]" />
              <Ctr className="w-[28px] ml-[3px]"><CircleHelp size={16} strokeWidth={1.300} color="#555" /></Ctr>
              <Ctr className="w-[8px]"><Caret /></Ctr>
              <Ctr className="w-[18px] ml-[65px]"><div className="w-[8px] h-[2px] bg-[#333] mb-[1px]" /></Ctr>
              <Ctr className="w-[18px] ml-[7px]"><div className="w-[11px] h-[11px] border border-[#333]" /></Ctr>
              <Ctr className="w-[18px] ml-[8px]"><S w={13} h={13}><path d="M1 1l11 11M12 1L1 12" stroke="#222" strokeWidth={1.300} /></S></Ctr>
            </div>
          </div>
        </div>
        {/* menu */}
        <div className="h-[20px] bg-[#ededed] flex items-center shrink-0 pl-[17px] gap-[24.4px] relative">
          {menu.map((m) => <span key={m}>{m}</span>)}
          <div className="ml-auto flex items-center">
            <Ctr className="w-[12px]"><div className="w-[8px] h-[2px] bg-[#333] mt-[7px]" /></Ctr>
            <Ctr className="w-[18px] ml-[3px]"><S w={12} h={12}><path d="M3.500 3V1h8v7H9M.500 3.500h8v8h-8z" stroke="#333" /></S></Ctr>
            <Ctr className="w-[18px]"><S w={12} h={12}><path d="M1 1l10 10M11 1L1 11" stroke="#222" strokeWidth={1.300} /></S></Ctr>
          </div>
        </div>
        {/* tabs */}
        <div className="h-[24px] bg-[#d7d7d7] border-t border-[#e4e4e4] flex items-end shrink-0 pl-[6px]">
          <div className="px-[10px] h-[20px] flex items-center">Start</div>
          <div className="w-[45px] ml-[1px] h-[20px] bg-[#f5f5f5] flex items-center justify-center">Start</div>
          {tabsLeft.map((t, k) => <div key={k} className="px-[10.35px] h-[20px] flex items-center whitespace-nowrap">{t}</div>)}
          <div className="ml-[21px] h-[20px] flex items-center gap-[4px]">
            <S w={15} h={9}><path d="M.500.500h14v8H.500z" stroke="#666" /><path d="M5 6l2.500-3L10 6z" fill="#555" stroke="none" /></S>
            <svg width="5" height="3" viewBox="0 0 5 3"><path d="M0 0h5L2.500 3z" fill="#666" /></svg>
          </div>
        </div>
        {/* ribbon */}
        <div className="h-[104px] bg-[#f5f5f5] shrink-0">
          <div className="h-[99px] flex pl-[4px] border-b border-[#dcdcdc]">
            <Panel className="w-[163px]">
              <div className="h-[78px] flex">
                <Big className="w-[66px] ml-[1px]" icon={<Quader />} label="Quader" caret />
                <Big className="w-[66px]" icon={<Extrusion />} label="Extrusion" caret />
                <div className="ml-[5px] pt-[5px] flex flex-col">
                  <Ctr className="h-[24px] w-[20px]"><M1 /></Ctr>
                  <Ctr className="h-[24px] w-[20px]"><M2 /></Ctr>
                </div>
              </div>
              <PanelLabel text="Modellieren" caret className="pl-[43px]" />
            </Panel>
            <Panel className="w-[164px]">
              <div className="h-[78px] pt-[5px] pl-[36px] grid grid-cols-[28px_28px_20px_16px] auto-rows-[24px]">
                <Cells items={[V11, V12, V13, Caret, V21, V22, V23, Caret, V31, V32, V33, Caret]} />
              </div>
              <PanelLabel text="Volumenkörper bearbeiten" caret className="pl-[5px]" />
            </Panel>
            <Panel className="w-[94px]">
              <div className="h-[78px] pt-[5px] pl-[5px] grid grid-cols-[22px_26px_30px_6px] auto-rows-[24px]">
                <Cells items={[Z11, Z12, Z13, Caret, Z21, Z22, Z23, Caret, Z31, Z32, Z33, Caret]} />
              </div>
              <PanelLabel text="Zeichnen" caret className="pl-[16px]" />
            </Panel>
            <Panel className="w-[145px]">
              <div className="h-[78px] pt-[5px] pl-[3px] grid grid-cols-[22px_34px_16px_38px_14px_16px] auto-rows-[24px]">
                <Cells items={[A11, A12, A13, A14, A15, Caret, A21, A22, A23, A24, A25, Caret, A31, A32, A33, A34, A35, Caret]} />
              </div>
              <PanelLabel text="Ändern" caret className="pl-[46px]" />
            </Panel>
            <Panel className="w-[101px]">
              <div className="h-[78px] flex justify-center"><Big className="pl-[1px]" icon={<Abbild />} label="2D-Abbild" /></div>
              <PanelLabel text="Querschnitt" caret launch={<span className="ml-[9px]"><Launch /></span>} className="pl-[6px]" />
            </Panel>
            <Panel className="w-[145px]">
              <div className="h-[78px] pt-[5px] pl-[4px] grid grid-cols-[22px_10px_38px_16px_34px_14px] auto-rows-[24px]">
                <Cells items={[K11, Caret, K12, K13, K14, K15, K21, Caret, K22, K23, K24, K25]} />
                <Ctr><K31 /></Ctr><Ctr><Caret /></Ctr>
                <div className="col-span-4 flex items-center ml-[7px]">
                  <Dropdown className="w-[100px] shrink-0" icon={<Welt />} text="Welt" />
                </div>
              </div>
              <PanelLabel text="Koordinaten" launch={<span className="ml-[37px]"><Launch /></span>} className="pl-[33px]" />
            </Panel>
            <Panel className="w-[178px]">
              <div className="h-[78px] pt-[6px] pl-[3px] flex flex-col gap-[3px]">
                <Dropdown className="w-[172px]" icon={<Wire />} text="2D-Drahtkörper" />
                <Dropdown className="w-[172px]" icon={<UnsavedV />} text="Ungesicherte Ansicht" />
                <div className="flex items-center h-[21px] pl-[2px] gap-[3px]"><AV /><Caret /></div>
              </div>
              <PanelLabel text="Ansicht" caret className="pl-[62px]" />
            </Panel>
            <Panel className="w-[283px] border-r-0">
              <div className="h-[78px] flex">
                <Big className="w-[118px] pl-[2px]" icon={<Iso />} label="Ausschlussverfahren" />
                <Big className="w-[70px] pl-[2px]" icon={<Filt />} label="Kein Filter" caret />
                <Big className="w-[66px] pl-[2px] ml-[13px]" icon={<Gizmo />} label={<>Verschieben-<br />Gizmo</>} />
                <div className="pt-[40px] pl-[4px]"><Caret /></div>
              </div>
              <PanelLabel text="Auswahl" className="pl-[119px]" />
            </Panel>
            <div className="flex gap-[2px] pt-[1px] ml-[1px]">
              <SidePanel icon={<LayerI />} label="Layer" />
              <SidePanel icon={<Gruppen />} label="Gruppen" />
              <SidePanel icon={<AnsichtI />} label="Ansicht" />
            </div>
          </div>
        </div>
        {/* middle */}
        <div className="h-[717px] flex shrink-0">
          <div className="w-[32px] shrink-0 pl-[3px] flex flex-col gap-[2px] bg-[#f5f5f5]">
            <div className="w-[25px] h-[434px] border border-[#bdbdbd] flex flex-col items-center overflow-hidden">
              <Grip />
              <ToolItem k="a" /><ToolItem k="b" /><Sep />
              <ToolItem k="c" /><ToolItem k="d" /><ToolItem k="e" /><ToolItem k="f" /><ToolItem k="g" /><ToolItem k="h" /><Sep />
              <ToolItem k="i" h="h-[21px]" /><ToolItem k="j" h="h-[21px]" /><ToolItem k="k" /><Sep />
              <ToolItem k="l" h="h-[20px]" /><ToolItem k="m" h="h-[20px]" /><ToolItem k="n" h="h-[20px]" /><ToolItem k="o" h="h-[23px]" /><Sep />
              <ToolItem k="p" h="h-[21px]" /><ToolItem k="q" h="h-[21px]" /><Sep /><ToolItem k="r" />
            </div>
            <div className="w-[25px] h-[268px] border border-[#bdbdbd] flex flex-col items-center overflow-hidden">
              <Grip />
              <ToolItem k="s" h="h-[23px]" /><ToolItem k="t" h="h-[21px]" /><ToolItem k="u" h="h-[21px]" /><Sep />
              <ToolItem k="v" /><ToolItem k="w" /><Sep />
              <ToolItem k="x" /><ToolItem k="y" /><ToolItem k="z" /><ToolItem k="A" /><Sep />
              <ToolItem k="B" /><ToolItem k="C" />
            </div>
          </div>
          <div className="relative w-[1652px] bg-[#1f2324] overflow-hidden">
            <Drawing />
            <div className="absolute left-[3px] top-[6px] text-[#17b817] text-[11.6px] whitespace-nowrap">[−][Oben][2D-Drahtkörper]</div>
            <NavBar />
          </div>
        </div>
        <div className="h-[4px] bg-[#f8f8f8] shrink-0" />
        {/* sheet tabs */}
        <div className="h-[30px] bg-[#d6d6d6] flex items-start shrink-0 pl-[11px]">
          <div className="w-[70px] h-[24px] bg-[#f5f5f5] [clip-path:polygon(8px_0,100%_0,calc(100%-8px)_100%,0_100%)] flex items-center justify-center font-semibold text-[#222] text-[12px]">Modell</div>
          <div className="h-[24px] flex items-center ml-[9px]">Layout1</div>
          <div className="h-[24px] flex items-center ml-[9px] text-[#9a9a9a] text-[15px]">/</div>
          <div className="h-[24px] flex items-center ml-[11px] text-[#555] text-[22px]">+</div>
          <div className="h-[24px] flex items-center ml-[9px] text-[#9a9a9a] text-[15px]">/</div>
        </div>
        <Status />
      </div>
    </div>
  );
}
